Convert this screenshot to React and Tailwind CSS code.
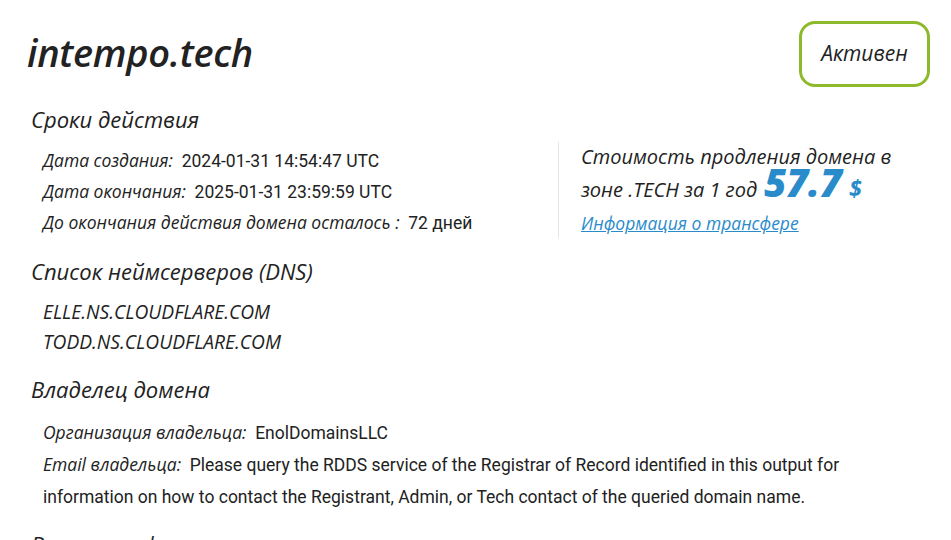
import React from "react";

const sans = "font-['Open_Sans',sans-serif]";
const val = "font-['Roboto',sans-serif]";

function Row({ label, value }) {
  return (
    <div className="h-[31px] leading-[31px] whitespace-nowrap">
      <span className="italic font-medium text-[17.5px] text-[#222]">{label}</span>
      <span className={`text-[17.5px] text-[#222] ${val}`}>&nbsp;&nbsp;{value}</span>
    </div>
  );
}

export default function App() {
  return (
    <div className={`w-[951px] h-[540px] overflow-hidden bg-white ${sans} text-[#222] pl-[27px] pr-[21px] pt-[21px]`}>
      <div className="flex justify-between items-start">
        <h1 className="italic font-semibold text-[38px] leading-[40px] mt-[11px] text-[#222] tracking-[-0.3px]">
          intempo.tech
        </h1>
        <div className="w-[131px] h-[66px] border-[3px] border-[#8cba2c] rounded-[16px] flex items-center justify-center italic font-medium text-[21px] text-[#222]">
          Активен
        </div>
      </div>

      <div className="pl-[4px] mt-[17px] italic font-medium text-[22px] leading-[30px]">Сроки действия</div>
      <div className="flex mt-[8px]">
        <div className="w-[531px] pl-[16px] pt-[3px]">
          <Row label="Дата создания:" value="2024-01-31 14:54:47 UTC" />
          <Row label="Дата окончания:" value="2025-01-31 23:59:59 UTC" />
          <Row label="До окончания действия домена осталось :" value="72 дней" />
        </div>
        <div className="h-[96px] border-l border-[#e6e6e6] pl-[22px]">
          <div className="-mt-[2px] italic font-medium text-[20px]">
            <div className="h-[33px] leading-[33px] whitespace-nowrap">Стоимость продления домена в</div>
            <div className="h-[33px] leading-[33px] whitespace-nowrap">
              <span>зоне .TECH за 1 год</span>
              <span className="ml-[7px] font-extrabold text-[38px] leading-[0px] text-[#2a8bcb]">57.7</span>
              <span className="ml-[7px] font-bold text-[23px] leading-[0px] text-[#2a8bcb]">$</span>
            </div>
            <div className="h-[33px] leading-[33px]">
              <a href="#" className="text-[17.5px] text-[#2a8bcb] underline">Информация о трансфере</a>
            </div>
          </div>
        </div>
      </div>

      <div className="pl-[4px] mt-[18px] italic font-medium text-[22px] leading-[30px]">Список неймсерверов (DNS)</div>
      <div className="pl-[16px] mt-[11px] italic font-medium text-[19.2px] leading-[30px]">
        <div>ELLE.NS.CLOUDFLARE.COM</div>
        <div>TODD.NS.CLOUDFLARE.COM</div>
      </div>

      <div className="pl-[4px] mt-[17px] italic font-medium text-[22px] leading-[30px]">Владелец домена</div>
      <div className="pl-[16px] mt-[13px] w-[860px] text-[17.5px] leading-[31px]">
        <div>
          <span className="italic font-medium">Организация владельца:</span>
          <span className={val}>&nbsp;&nbsp;EnolDomainsLLC</span>
        </div>
        <div>
          <span className="italic font-medium">Email владельца:</span>
          <span className={val}>&nbsp;&nbsp;Please query the RDDS service of the Registrar of Record identified in this output for information on how to contact the Registrant, Admin, or Tech contact of the queried domain name.</span>
        </div>
      </div>

      <div className="pl-[4px] mt-[16px] italic font-medium text-[22px] leading-[30px]">Важная информация</div>
    </div>
  );
}
